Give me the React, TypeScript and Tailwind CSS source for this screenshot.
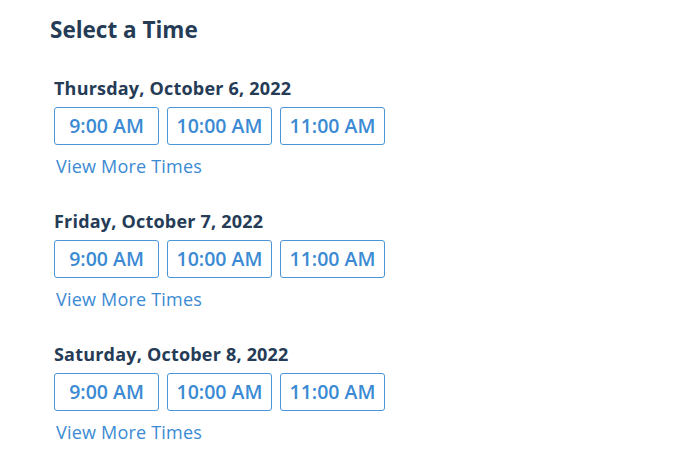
import React from "react";

const days = [
  "Thursday, October 6, 2022",
  "Friday, October 7, 2022",
  "Saturday, October 8, 2022",
];
const times = ["9:00 AM", "10:00 AM", "11:00 AM"];

export default function App() {
  return (
    <div
      className="w-[700px] h-[467px] bg-white pl-[50px] pt-[15px]"
      style={{ fontFamily: "'Open Sans', Lato, sans-serif" }}
    >
      <h1 className="text-[22.5px] leading-[30px] font-bold text-[#253b56]">
        Select a Time
      </h1>
      <div className="flex flex-col pl-[4px] pt-[36px] gap-[38px]">
        {days.map((d) => (
          <div key={d} className="flex flex-col">
            <div className="text-[18px] leading-[20px] font-bold text-[#253b56] tracking-[0.2px] -mt-[3px]">
              {d}
            </div>
            <div className="flex gap-[8px] mt-[9px]">
              {times.map((t) => (
                <button
                  key={t}
                  className="w-[105px] h-[38px] border border-[#4a96d9] rounded-[3px] text-[#3b8ad3] text-[19.5px] font-semibold flex items-center justify-center"
                >
                  {t}
                </button>
              ))}
            </div>
            <div className="text-[18px] leading-[20px] text-[#3b8ad3] mt-[11px] pl-[2px] tracking-[0.2px]">
              View More Times
            </div>
          </div>
        ))}
      </div>
    </div>
  );
}
